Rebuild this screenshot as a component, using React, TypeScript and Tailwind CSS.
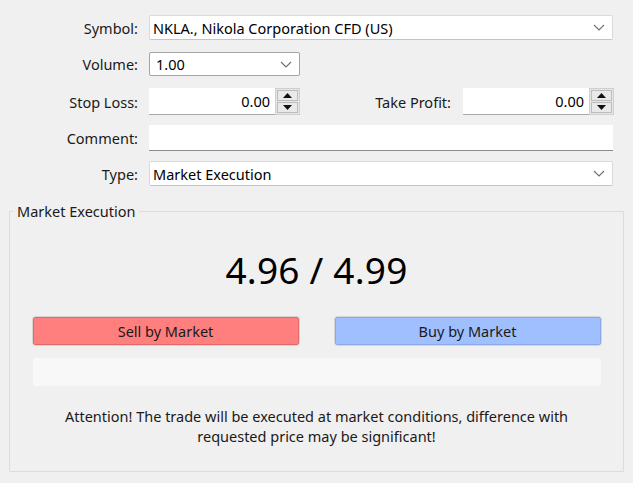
import React from 'react';

function Chevron() {
  return (
    <svg width="12" height="7" viewBox="0 0 12 7" className="shrink-0">
      <path d="M1 1l5 5 5-5" fill="none" stroke="#6e6e6e" strokeWidth="1.1" />
    </svg>
  );
}

function Spinner() {
  return (
    <div className="flex flex-col w-[25px] h-[27px] gap-[1px] border border-[#cfcfcf] bg-[#e6e6e6] p-[1px]">
      <div className="flex-1 flex items-center justify-center border border-[#bdbdbd] bg-[#e9e9e9]">
        <svg width="9" height="5" viewBox="0 0 9 5">
          <path d="M0 5L4.5 0L9 5Z" fill="#111" />
        </svg>
      </div>
      <div className="flex-1 flex items-center justify-center border border-[#bdbdbd] bg-[#e9e9e9]">
        <svg width="9" height="5" viewBox="0 0 9 5">
          <path d="M0 0L4.5 5L9 0Z" fill="#111" />
        </svg>
      </div>
    </div>
  );
}

function SpinEdit({ value }: { value: string }) {
  return (
    <div className="flex items-center">
      <div className="w-[126px] h-[27px] bg-white border-b border-[#a8a8a8] flex items-center justify-end pr-[5px]">
        {value}
      </div>
      <Spinner />
    </div>
  );
}

function Label({ text }: { text: string }) {
  return <div className="w-[138px] text-right text-[#1a1a1a] shrink-0">{text}</div>;
}

export default function App() {
  return (
    <div className="w-[633px] h-[483px] bg-[#f0f0f0] font-['Noto_Sans',sans-serif] text-[14.5px] leading-[20px] text-black overflow-hidden">
      <div className="pt-[15px] flex flex-col">
        <div className="flex items-center h-[25px]">
          <Label text="Symbol:" />
          <div className="ml-[11px] w-[464px] h-[25px] bg-white border border-[#dadada] border-b-[#c4c4c4] rounded-[2px] flex items-center justify-between pl-[3px] pr-[7px]">
            <span>NKLA., Nikola Corporation CFD (US)</span>
            <Chevron />
          </div>
        </div>

        <div className="flex items-center h-[24px] mt-[12px]">
          <Label text="Volume:" />
          <div className="ml-[11px] w-[151px] h-[24px] bg-white border border-[#a4a4a4] rounded-[2px] flex items-center justify-between pl-[6px] pr-[7px]">
            <span>1.00</span>
            <Chevron />
          </div>
        </div>

        <div className="flex items-center h-[27px] mt-[12px]">
          <Label text="Stop Loss:" />
          <div className="ml-[11px]">
            <SpinEdit value="0.00" />
          </div>
          <div className="w-[151px] text-right text-[#1a1a1a]">Take Profit:</div>
          <div className="ml-[12px]">
            <SpinEdit value="0.00" />
          </div>
        </div>

        <div className="flex items-center h-[26px] mt-[10px]">
          <Label text="Comment:" />
          <div className="ml-[11px] w-[464px] h-[26px] bg-white border-b border-[#8c8c8c]" />
        </div>

        <div className="flex items-center h-[25px] mt-[10px]">
          <Label text="Type:" />
          <div className="ml-[11px] w-[464px] h-[25px] bg-white border border-[#dadada] border-b-[#c4c4c4] rounded-[2px] flex items-center justify-between pl-[3px] pr-[7px]">
            <span>Market Execution</span>
            <Chevron />
          </div>
        </div>
      </div>

      <fieldset className="mt-[15px] ml-[9px] w-[615px] h-[271px] border border-[#dcdcdc] rounded-[1px] flex flex-col items-center">
        <legend className="ml-[3px] px-[4px] text-[#1a1a1a]">Market Execution</legend>
        <div className="mt-[27px] text-[37px] leading-[44px] tracking-[0.2px]">4.96 / 4.99</div>
        <div className="mt-[25px] w-[568px] flex justify-between">
          <button className="w-[266px] h-[28px] bg-[#ff7f7f] border border-[#e06a6a] outline outline-1 outline-[#d6d6d6] rounded-[2px] text-[#1a1a1a] leading-[20px]">
            Sell by Market
          </button>
          <button className="w-[266px] h-[28px] bg-[#a0bfff] border border-[#8aa7e8] outline outline-1 outline-[#d6d6d6] rounded-[2px] text-[#1a1a1a] leading-[20px]">
            Buy by Market
          </button>
        </div>
        <div className="mt-[13px] w-[568px] h-[28px] bg-[#f8f8f8] rounded-[3px]" />
        <div className="mt-[20px] w-[530px] text-center text-[#1a1a1a]">
          Attention! The trade will be executed at market conditions, difference with requested price may be significant!
        </div>
      </fieldset>
    </div>
  );
}
